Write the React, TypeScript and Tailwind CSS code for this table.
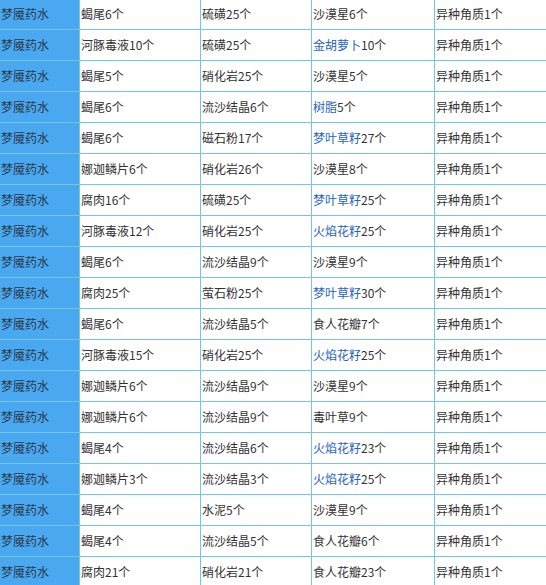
type Cell = { link?: string; text: string }

const rows: [string, string, Cell][] = [
  ['蝎尾6个', '硫磺25个', { text: '沙漠星6个' }],
  ['河豚毒液10个', '硫磺25个', { link: '金胡萝卜', text: '10个' }],
  ['蝎尾5个', '硝化岩25个', { text: '沙漠星5个' }],
  ['蝎尾6个', '流沙结晶6个', { link: '树脂', text: '5个' }],
  ['蝎尾6个', '磁石粉17个', { link: '梦叶草籽', text: '27个' }],
  ['娜迦鳞片6个', '硝化岩26个', { text: '沙漠星8个' }],
  ['腐肉16个', '硫磺25个', { link: '梦叶草籽', text: '25个' }],
  ['河豚毒液12个', '硝化岩25个', { link: '火焰花籽', text: '25个' }],
  ['蝎尾6个', '流沙结晶9个', { text: '沙漠星9个' }],
  ['腐肉25个', '萤石粉25个', { link: '梦叶草籽', text: '30个' }],
  ['蝎尾6个', '流沙结晶5个', { text: '食人花瓣7个' }],
  ['河豚毒液15个', '硝化岩25个', { link: '火焰花籽', text: '25个' }],
  ['娜迦鳞片6个', '流沙结晶9个', { text: '沙漠星9个' }],
  ['娜迦鳞片6个', '流沙结晶9个', { text: '毒叶草9个' }],
  ['蝎尾4个', '流沙结晶6个', { link: '火焰花籽', text: '23个' }],
  ['娜迦鳞片3个', '流沙结晶3个', { link: '火焰花籽', text: '25个' }],
  ['蝎尾4个', '水泥5个', { text: '沙漠星9个' }],
  ['蝎尾4个', '流沙结晶5个', { text: '食人花瓣6个' }],
  ['腐肉21个', '硝化岩21个', { text: '食人花瓣23个' }],
]

export default function App() {
  return (
    <div
      className="w-[546px] h-[585px] overflow-hidden bg-white text-[12px] text-[#333]"
      style={{ fontFamily: '"Microsoft YaHei", "Noto Sans CJK SC", sans-serif' }}
    >
      <div className="-mt-px">
        {rows.map(([a, b, c], i) => (
          <div key={i} className="flex h-[31px] border-b border-[#72c8e0]">
            <div className="w-[79px] shrink-0 bg-[#4aa8f0] flex items-center pl-px text-[#2a3a4a]">
              梦魇药水
            </div>
            <div className="w-[121px] shrink-0 border-l border-[#72c8e0] flex items-center pl-px">
              {a}
            </div>
            <div className="w-[111px] shrink-0 border-l border-[#72c8e0] flex items-center pl-px">
              {b}
            </div>
            <div className="w-[123px] shrink-0 border-l border-[#72c8e0] flex items-center pl-px">
              {c.link && <span className="text-[#2563c4]">{c.link}</span>}
              {c.text}
            </div>
            <div className="flex-1 border-l border-[#72c8e0] flex items-center pl-px">
              异种角质1个
            </div>
          </div>
        ))}
      </div>
    </div>
  )
}
